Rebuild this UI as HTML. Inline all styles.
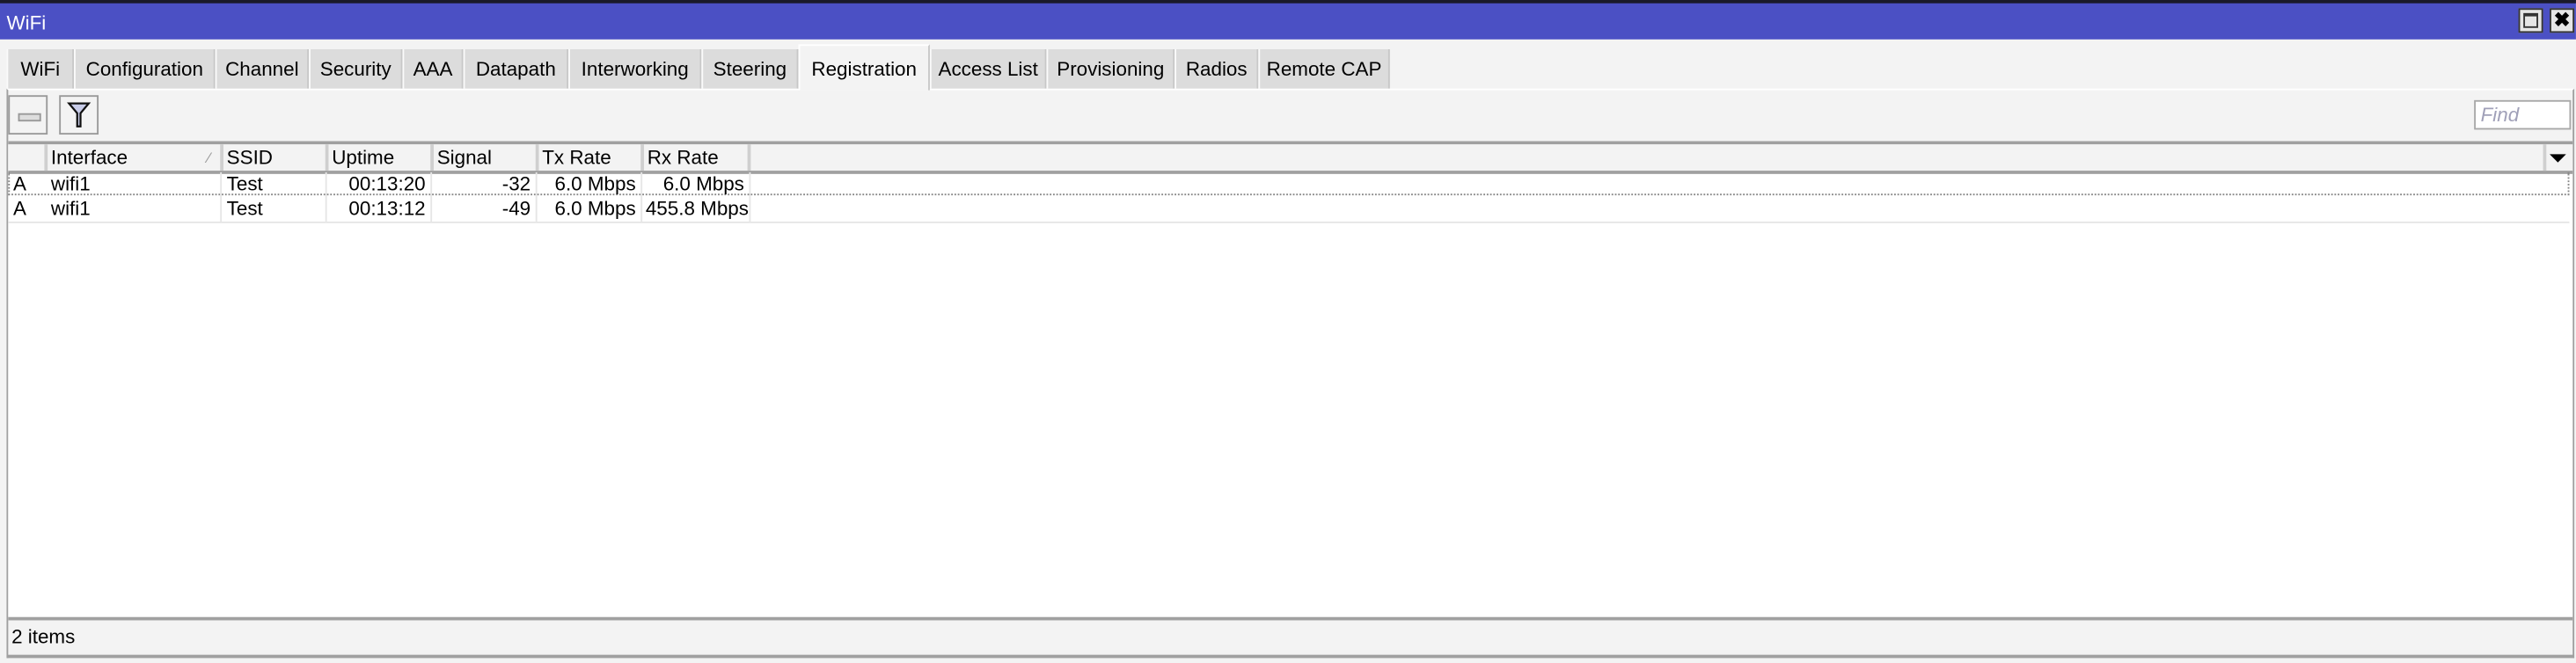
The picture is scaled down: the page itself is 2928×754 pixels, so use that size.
<!DOCTYPE html>
<html><head><meta charset="utf-8"><style>
html,body{margin:0;padding:0;width:2928px;height:754px;overflow:hidden;background:#f3f3f3}
#w{position:absolute;left:0;top:0;width:1568px;height:404px;transform-origin:0 0;transform:scale(1.8673,1.8663);font-family:"Liberation Sans",sans-serif;font-size:12px;color:#000;background:#f3f3f3}
.a{position:absolute}
#title{left:0;top:0;width:1568px;height:24px;background:#4b50c4;border-top:2px solid #1a1a2a;box-sizing:border-box}
#title span{position:absolute;left:4px;top:5px;color:#fff;font-size:12px}
.wb{top:5px;width:15px;height:15px;background:#e6e6e6;border:1px solid #333;box-sizing:border-box}
.tab{top:30px;height:24px;background:#dcdcdc;border-left:1px solid #fafafa;border-right:1px solid #c8c8c8;box-sizing:border-box;text-align:center;line-height:25px}
.tab.on{top:27px;height:28px;background:#f3f3f3;border-left:1px solid #fff;border-top:1px solid #fff;line-height:28px;z-index:2}
#panel{left:4px;top:54px;width:1563px;height:347px;border-top:1px solid #fff;border-left:1px solid #a0a0a0;border-right:1px solid #a0a0a0;border-bottom:2px solid #a0a0a0;box-sizing:border-box}
.btn{top:58px;width:24px;height:24px;border:1px solid #9a9a9a;background:#f3f3f3;box-sizing:border-box}
#grid{left:5px;top:86px;width:1561px;height:292px;background:#fff;border-top:2px solid #a0a0a0;border-bottom:2px solid #a0a0a0;box-sizing:border-box}
#hdr{left:5px;top:88px;width:1561px;height:16px;background:#f3f3f3;border-bottom:2px solid #a0a0a0;box-sizing:content-box}
.hc{top:88px;height:16px;border-right:2px solid #cfcfcf;box-sizing:border-box;padding-left:3px;line-height:16px}
.c{height:15px;line-height:15px;white-space:nowrap;box-sizing:border-box;padding:0 3px}
.r{text-align:right;border-right:1px solid #e6e6e6}
</style></head><body><div id="w">
<div id="title" class="a"><span>WiFi</span></div>
<div class="a wb" style="left:1533px"><div style="position:absolute;left:2px;top:2px;width:9px;height:9px;border:1px solid #333;box-sizing:border-box;border-top-width:2px"></div></div>
<div class="a wb" style="left:1552px;text-align:center;font-weight:bold;font-size:12px;line-height:13px">✖</div>

<div class="a tab" style="left:4px;width:41px">WiFi</div>
<div class="a tab" style="left:45px;width:86px">Configuration</div>
<div class="a tab" style="left:131px;width:57px">Channel</div>
<div class="a tab" style="left:188px;width:57px">Security</div>
<div class="a tab" style="left:245px;width:37px">AAA</div>
<div class="a tab" style="left:282px;width:64px">Datapath</div>
<div class="a tab" style="left:346px;width:81px">Interworking</div>
<div class="a tab" style="left:427px;width:59px">Steering</div>
<div class="a tab on" style="left:486px;width:80px">Registration</div>
<div class="a tab" style="left:566px;width:71px">Access List</div>
<div class="a tab" style="left:637px;width:78px">Provisioning</div>
<div class="a tab" style="left:715px;width:51px">Radios</div>
<div class="a tab" style="left:766px;width:80px">Remote CAP</div>

<div id="panel" class="a"></div>
<div class="a btn" style="left:5px"><div style="position:absolute;left:5px;top:10px;width:12px;height:3px;border:1px solid #999;background:#ddd"></div></div>
<div class="a btn" style="left:36px"><svg width="22" height="22" style="position:absolute;left:0;top:0"><path d="M5 4 H17 L12 10 V18 H10 V10 Z" fill="#c8cce8" stroke="#111" stroke-width="1.2"/></svg></div>
<div class="a" style="left:1506px;top:61px;width:59px;height:18px;background:#fff;border:1px solid #a8a8a8;box-sizing:border-box;color:#a0a0b8;font-style:italic;padding-left:3px;line-height:16px">Find</div>

<div id="grid" class="a"></div>
<div id="hdr" class="a"></div>
<div class="a hc" style="left:5px;width:24px"></div>
<div class="a hc" style="left:28px;width:108px">Interface<span style="position:absolute;right:6px;top:0;color:#999;font-size:9px">⁄</span></div>
<div class="a hc" style="left:135px;width:65px">SSID</div>
<div class="a hc" style="left:199px;width:65px">Uptime</div>
<div class="a hc" style="left:263px;width:65px">Signal</div>
<div class="a hc" style="left:327px;width:65px">Tx Rate</div>
<div class="a hc" style="left:391px;width:66px">Rx Rate</div>
<div class="a hc" style="left:1548px;width:18px;border-left:2px solid #cfcfcf;border-right:0;padding:0"><svg width="14" height="16"><path d="M2 6 H12 L7 11 Z" fill="#000"/></svg></div>

<div class="a" style="left:5px;top:105px;width:1559px;height:14px;border:1px dotted #888;border-top:0;box-sizing:border-box"></div>
<div class="a" style="left:5px;top:105px;width:1559px">
<div style="display:flex" class="row"><div class="c" style="width:23px">A</div><div class="c" style="width:107px;border-right:1px solid #e6e6e6">wifi1</div><div class="c" style="width:64px;border-right:1px solid #e6e6e6">Test</div><div class="c r" style="width:64px">00:13:20</div><div class="c r" style="width:64px">-32</div><div class="c r" style="width:64px">6.0 Mbps</div><div class="c r" style="width:66px">6.0 Mbps</div></div>
<div style="display:flex;border-bottom:1px solid #e6e6e6"><div class="c" style="width:23px">A</div><div class="c" style="width:107px;border-right:1px solid #e6e6e6">wifi1</div><div class="c" style="width:64px;border-right:1px solid #e6e6e6">Test</div><div class="c r" style="width:64px">00:13:12</div><div class="c r" style="width:64px">-49</div><div class="c r" style="width:64px">6.0 Mbps</div><div class="c r" style="width:66px;padding:0 2px">455.8 Mbps</div></div>
</div>

<div class="a" style="left:7px;top:381px">2 items</div>
</div></body></html>
